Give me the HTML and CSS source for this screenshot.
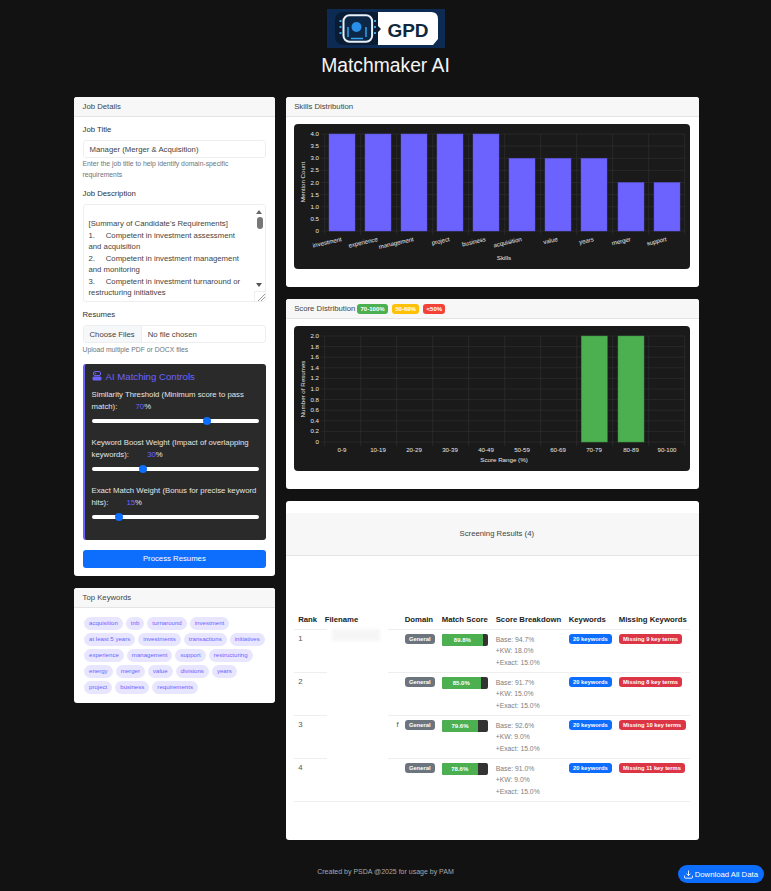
FILE: index.html
```html
<!DOCTYPE html>
<html lang="en">
<head>
    <meta charset="UTF-8">
    <meta name="viewport" content="width=device-width, initial-scale=1.0">
    <title>Matchmaker AI</title>
    <link rel="stylesheet" href="styles.css">
</head>
<body>

    <header class="page-head">
        <svg class="logo" viewBox="0 0 118 39" width="118" height="39">
            <rect width="118" height="39" fill="#0d2b52"/>
            <rect x="8" y="3" width="46" height="33" rx="8" fill="#0a1c33"/>
            <path d="M51 3h53q7 0 7 7v20l-5 6H51V23l3-3-3-3z" fill="#fff"/>
            <rect x="16.500" y="6.300" width="28.600" height="26.400" rx="6" fill="#0d2747" stroke="#e8f2fa" stroke-width="2"/>
            <circle cx="29.500" cy="18" r="5" fill="#2a8fe8"/>
            <path d="M21 28v-10M39 28v-10M24 29.500h12" stroke="#35a4e8" stroke-width="1.500" fill="none"/>
            <path d="M12.500 12h2M12.500 18h2M12.500 24h2M47 12h2M47 18h2M47 24h2" stroke="#35a4e8" stroke-width="2"/>
            <text class="logo-text" x="81" y="27.500" text-anchor="middle">GPD</text>
        </svg>
        <h1>Matchmaker AI</h1>
    </header>

    <main class="layout">
        <aside class="side">
            <section class="card">
                <div class="card-header">Job Details</div>
                <div class="card-body">
                    <label class="field-label">Job Title</label>
                    <div class="input">Manager (Merger &amp; Acquisition)</div>
                    <p class="hint hint-title">Enter the job title to help identify domain-specific requirements</p>

                    <label class="field-label">Job Description</label>
                    <div class="textarea">
                        <div class="textarea-text">[Summary of Candidate's Requirements]
1.     Competent in investment assessment and acquisition
2.     Competent in investment management and monitoring
3.     Competent in investment turnaround or restructuring initiatives
4.     Able to drive performance of portfolio</div>
                        <div class="scroll">
                            <span class="scroll-up"></span>
                            <span class="scroll-thumb"></span>
                            <span class="scroll-down"></span>
                            <span class="scroll-grip"></span>
                        </div>
                    </div>

                    <label class="field-label">Resumes</label>
                    <div class="file-input">
                        <span class="file-btn">Choose Files</span>
                        <span class="file-name">No file chosen</span>
                    </div>
                    <p class="hint">Upload multiple PDF or DOCX files</p>

                    <div class="ai-box">
                        <h3 class="ai-title">
                            <svg viewBox="0 0 10 10" width="10" height="10">
                                <rect x="1.500" y="0.500" width="7" height="4" rx="1.500" fill="none" stroke="#6c63ff" stroke-width="1"/>
                                <rect x="0.500" y="5.500" width="9" height="4" rx="1.500" fill="#6c63ff"/>
                                <circle cx="3.500" cy="2.500" r="0.800" fill="#6c63ff"/>
                            </svg>
                            AI Matching Controls
                        </h3>
                        <div class="ai-label">Similarity Threshold (Minimum score to pass<br>match): <span class="ai-val">70</span>%</div>
                        <input class="slider" type="range" min="0" max="100" value="70">
                        <div class="ai-label">Keyword Boost Weight (Impact of overlapping<br>keywords): <span class="ai-val">30</span>%</div>
                        <input class="slider" type="range" min="0" max="100" value="30">
                        <div class="ai-label">Exact Match Weight (Bonus for precise keyword<br>hits): <span class="ai-val">15</span>%</div>
                        <input class="slider" type="range" min="0" max="100" value="15">
                    </div>

                    <button class="btn-process">Process Resumes</button>
                </div>
            </section>

            <section class="card">
                <div class="card-header">Top Keywords</div>
                <div class="pills">
                    <span class="pill">acquisition</span>
                    <span class="pill">tnb</span>
                    <span class="pill">turnaround</span>
                    <span class="pill">investment</span>
                    <span class="pill">at least 5 years</span>
                    <span class="pill">investments</span>
                    <span class="pill">transactions</span>
                    <span class="pill">initiatives</span>
                    <span class="pill">experience</span>
                    <span class="pill">management</span>
                    <span class="pill">support</span>
                    <span class="pill">restructuring</span>
                    <span class="pill">energy</span>
                    <span class="pill">merger</span>
                    <span class="pill">value</span>
                    <span class="pill">divisions</span>
                    <span class="pill">years</span>
                    <span class="pill">project</span>
                    <span class="pill">business</span>
                    <span class="pill">requirements</span>
                </div>
            </section>
        </aside>

        <div class="content">
            <section class="card chart-card">
                <div class="card-header">Skills Distribution</div>
                <div class="chart-wrap">
                    <svg class="chart" viewBox="295 124 396 145" width="396" height="145">
                        <path class="grid" d="M322 134H686M322 146.100H686M322 158.300H686M322 170.400H686M322 182.500H686M322 194.600H686M322 206.800H686M322 218.900H686M322 231H686"/>
                        <path class="grid" d="M325.700 134V235M361.700 134V235M397.700 134V235M433.700 134V235M469.700 134V235M505.700 134V235M541.700 134V235M577.700 134V235M613.700 134V235M649.700 134V235M685.700 134V235"/>
                        <g class="bar-purple">
                            <rect x="330" y="134" width="26" height="97"/>
                            <rect x="366" y="134" width="26" height="97"/>
                            <rect x="402" y="134" width="26" height="97"/>
                            <rect x="438" y="134" width="26" height="97"/>
                            <rect x="474" y="134" width="26" height="97"/>
                            <rect x="510" y="158.300" width="26" height="72.700"/>
                            <rect x="546" y="158.300" width="26" height="72.700"/>
                            <rect x="582" y="158.300" width="26" height="72.700"/>
                            <rect x="619" y="182.500" width="26" height="48.500"/>
                            <rect x="655" y="182.500" width="26" height="48.500"/>
                        </g>
                        <g class="tick" text-anchor="end">
                            <text x="320" y="136">4.0</text>
                            <text x="320" y="148">3.5</text>
                            <text x="320" y="160">3.0</text>
                            <text x="320" y="172">2.5</text>
                            <text x="320" y="185">2.0</text>
                            <text x="320" y="197">1.5</text>
                            <text x="320" y="209">1.0</text>
                            <text x="320" y="221">0.5</text>
                            <text x="320" y="233">0</text>
                        </g>
                        <g class="tick" text-anchor="end">
                            <text transform="translate(343 241) rotate(-13)">investment</text>
                            <text transform="translate(379 241) rotate(-13)">experience</text>
                            <text transform="translate(415 241) rotate(-13)">management</text>
                            <text transform="translate(451 241) rotate(-13)">project</text>
                            <text transform="translate(487 241) rotate(-13)">business</text>
                            <text transform="translate(523 241) rotate(-13)">acquisition</text>
                            <text transform="translate(559 241) rotate(-13)">value</text>
                            <text transform="translate(595 241) rotate(-13)">years</text>
                            <text transform="translate(632 241) rotate(-13)">merger</text>
                            <text transform="translate(668 241) rotate(-13)">support</text>
                        </g>
                        <text class="axis" x="505" y="260" text-anchor="middle">Skills</text>
                        <text class="axis" transform="translate(306 182) rotate(-90)" text-anchor="middle">Mention Count</text>
                    </svg>
                </div>
            </section>

            <section class="card chart-card">
                <div class="card-header score-head">
                    Score Distribution
                    <span class="legend legend-green">70-100%</span>
                    <span class="legend legend-amber">50-69%</span>
                    <span class="legend legend-red">&lt;50%</span>
                </div>
                <div class="chart-wrap">
                    <svg class="chart" viewBox="295 326 396 145" width="396" height="145">
                        <path class="grid" d="M322 336H686M322 346.600H686M322 357.200H686M322 367.800H686M322 378.400H686M322 389H686M322 399.600H686M322 410.200H686M322 420.800H686M322 431.400H686M322 442H686"/>
                        <path class="grid" d="M325.700 336V446M361.700 336V446M397.700 336V446M433.700 336V446M469.700 336V446M505.700 336V446M541.700 336V446M577.700 336V446M613.700 336V446M649.700 336V446M685.700 336V446"/>
                        <g class="bar-green">
                            <rect x="582.300" y="336" width="26" height="106"/>
                            <rect x="619" y="336" width="26" height="106"/>
                        </g>
                        <g class="tick" text-anchor="end">
                            <text x="320" y="338">2.0</text>
                            <text x="320" y="348.600">1.8</text>
                            <text x="320" y="359.200">1.6</text>
                            <text x="320" y="369.800">1.4</text>
                            <text x="320" y="380.400">1.2</text>
                            <text x="320" y="391">1.0</text>
                            <text x="320" y="401.600">0.8</text>
                            <text x="320" y="412.200">0.6</text>
                            <text x="320" y="422.800">0.4</text>
                            <text x="320" y="433.400">0.2</text>
                            <text x="320" y="444">0</text>
                        </g>
                        <g class="tick" text-anchor="middle">
                            <text x="343" y="452">0-9</text>
                            <text x="379" y="452">10-19</text>
                            <text x="415" y="452">20-29</text>
                            <text x="451" y="452">30-39</text>
                            <text x="487" y="452">40-49</text>
                            <text x="523" y="452">50-59</text>
                            <text x="559" y="452">60-69</text>
                            <text x="595" y="452">70-79</text>
                            <text x="632" y="452">80-89</text>
                            <text x="668" y="452">90-100</text>
                        </g>
                        <text class="axis" x="505" y="462" text-anchor="middle">Score Range (%)</text>
                        <text class="axis" transform="translate(306 389) rotate(-90)" text-anchor="middle">Number of Resumes</text>
                    </svg>
                </div>
            </section>

            <section class="card results-card">
                <div class="results-head">Screening Results (4)</div>
                <table class="results">
                    <thead>
                        <tr>
                            <th class="c-rank">Rank</th>
                            <th class="c-file file">Filename<span class="patch"></span></th>
                            <th class="c-domain">Domain</th>
                            <th class="c-score">Match Score</th>
                            <th class="c-break">Score Breakdown</th>
                            <th class="c-kw">Keywords</th>
                            <th class="c-miss">Missing Keywords</th>
                        </tr>
                    </thead>
                    <tbody>
                        <tr>
                            <td>1</td>
                            <td class="file"><span class="smudge"></span><span class="patch"></span></td>
                            <td><span class="badge badge-grey">General</span></td>
                            <td><div class="score"><div class="score-fill" style="width: 89.8%">89.8%</div></div></td>
                            <td class="breakdown">Base: 94.7%<br>+KW: 18.0%<br>+Exact: 15.0%</td>
                            <td><span class="badge badge-blue">20 keywords</span></td>
                            <td><span class="badge badge-red">Missing 9 key terms</span></td>
                        </tr>
                        <tr>
                            <td>2</td>
                            <td class="file"><span class="patch"></span></td>
                            <td><span class="badge badge-grey">General</span></td>
                            <td><div class="score"><div class="score-fill" style="width: 85%">85.0%</div></div></td>
                            <td class="breakdown">Base: 91.7%<br>+KW: 15.0%<br>+Exact: 15.0%</td>
                            <td><span class="badge badge-blue">20 keywords</span></td>
                            <td><span class="badge badge-red">Missing 8 key terms</span></td>
                        </tr>
                        <tr>
                            <td>3</td>
                            <td class="file file-tail">f<span class="patch"></span></td>
                            <td><span class="badge badge-grey">General</span></td>
                            <td><div class="score"><div class="score-fill" style="width: 79.6%">79.6%</div></div></td>
                            <td class="breakdown">Base: 92.6%<br>+KW: 9.0%<br>+Exact: 15.0%</td>
                            <td><span class="badge badge-blue">20 keywords</span></td>
                            <td><span class="badge badge-red">Missing 10 key terms</span></td>
                        </tr>
                        <tr>
                            <td>4</td>
                            <td class="file"></td>
                            <td><span class="badge badge-grey">General</span></td>
                            <td><div class="score"><div class="score-fill" style="width: 78.6%">78.6%</div></div></td>
                            <td class="breakdown">Base: 91.0%<br>+KW: 9.0%<br>+Exact: 15.0%</td>
                            <td><span class="badge badge-blue">20 keywords</span></td>
                            <td><span class="badge badge-red">Missing 11 key terms</span></td>
                        </tr>
                    </tbody>
                </table>
            </section>
        </div>
    </main>

    <footer class="page-foot">Created by PSDA @2025 for usage by PAM</footer>

    <button class="btn-download">
        <svg viewBox="0 0 16 16" width="9" height="9">
            <path d="M8 1v9M4.500 6.500 8 10l3.500-3.500M1 10v3.500q0 1 1 1h12q1 0 1-1V10" fill="none" stroke="#fff" stroke-width="1.600"/>
        </svg>
        Download All Data
    </button>

</body>
</html>
```

FILE: styles.css
```css
* {
    margin: 0;
    padding: 0;
    box-sizing: border-box;
}

body {
    font-family: "Liberation Sans", Arial, sans-serif;
    background-color: #121212;
    color: #212529;
    font-size: 7.75px;
    height: 891px;
    overflow: hidden;
}

/* page head */
.page-head {
    display: flex;
    flex-direction: column;
    align-items: center;
    padding-top: 9px;
}

.logo {
    display: block;
}

.logo-text {
    font-weight: 700;
    font-size: 19px;
    fill: #10283c;
}

h1 {
    color: #f5f5f5;
    font-size: 19.300px;
    font-weight: 400;
    line-height: 24px;
    margin-top: 6px;
}

/* columns */
.layout {
    display: flex;
    gap: 11px;
    width: 625px;
    margin: 19px 0 0 74px;
}

.side {
    width: 201px;
    display: flex;
    flex-direction: column;
    gap: 12px;
}

.content {
    width: 414px;
    display: flex;
    flex-direction: column;
    gap: 12px;
}

.card {
    background: #fff;
    border-radius: 3px;
    overflow: hidden;
}

.card-header {
    height: 20px;
    line-height: 19px;
    padding: 0 8.500px;
    background: #f7f7f7;
    border-bottom: 1px solid #e4e4e4;
    color: #444;
}

.card-body {
    padding: 8px 8.500px;
}

/* form */
.field-label {
    display: block;
    line-height: 10px;
    color: #333;
}

.input {
    height: 18px;
    line-height: 17px;
    margin-top: 5px;
    padding: 0 6px;
    border: 1px solid #eceef0;
    border-radius: 3px;
    color: #444;
}

.hint {
    font-size: 6.800px;
    line-height: 10.500px;
    color: #6c757d;
    margin-top: 2px;
    margin-bottom: 8px;
}

.hint-title {
    margin-top: 1px;
    margin-bottom: 9px;
}

.textarea {
    position: relative;
    height: 98px;
    margin-top: 5px;
    margin-bottom: 8px;
    border: 1px solid #eceef0;
    border-radius: 3px;
    overflow: hidden;
}

.textarea-text {
    padding: 13px 16px 0 5px;
    line-height: 11.500px;
    color: #444;
    white-space: pre-wrap;
}

.scroll {
    position: absolute;
    top: 0;
    right: 0;
    bottom: 0;
    width: 11px;
    background: #fff;
}

.scroll-up {
    position: absolute;
    top: 5px;
    left: 2px;
    border: 3.500px solid transparent;
    border-top: 0;
    border-bottom: 4px solid #666;
}

.scroll-thumb {
    position: absolute;
    top: 12px;
    left: 2.500px;
    width: 6px;
    height: 12px;
    border-radius: 3px;
    background: #777;
}

.scroll-down {
    position: absolute;
    bottom: 14px;
    left: 2px;
    border: 3.500px solid transparent;
    border-bottom: 0;
    border-top: 4px solid #555;
}

.scroll-grip {
    position: absolute;
    right: 0;
    bottom: 0;
    width: 11px;
    height: 10px;
    border-top: 1px solid #eee;
    border-left: 1px solid #eee;
    background: linear-gradient(135deg, #fff 62%, #999 62%, #999 68%, #fff 68%, #fff 78%, #999 78%, #999 84%, #fff 84%);
}

.file-input {
    display: flex;
    height: 18px;
    line-height: 17px;
    margin-top: 5px;
    border: 1px solid #eceef0;
    border-radius: 3px;
    overflow: hidden;
    color: #444;
}

.file-btn {
    padding: 0 6px;
    background: #f6f7f8;
    border-right: 1px solid #eceef0;
}

.file-name {
    padding: 0 6px;
}

/* AI box */
.ai-box {
    background: #2a2a2a;
    border-left: 2px solid #6c63ff;
    border-radius: 3px;
    height: 176px;
    padding: 6px 7px 0 7px;
    color: #e4e4e4;
}

.ai-title {
    display: flex;
    align-items: center;
    gap: 4px;
    font-size: 9.650px;
    font-weight: 400;
    line-height: 13px;
    color: #6c63ff;
    margin-bottom: 6px;
}

.ai-label {
    line-height: 12px;
}

.ai-val {
    color: #6c63ff;
    margin-left: 16px;
}

.slider {
    -webkit-appearance: none;
    appearance: none;
    display: block;
    width: 100%;
    height: 8px;
    margin: 4px 0 12px;
    background: transparent;
}

.slider::-webkit-slider-runnable-track {
    height: 4px;
    background: #fff;
    border-radius: 2px;
}

.slider::-webkit-slider-thumb {
    -webkit-appearance: none;
    width: 8px;
    height: 8px;
    margin-top: -2px;
    border-radius: 50%;
    background: #0d6efd;
}

.btn-process {
    display: block;
    width: 100%;
    height: 18px;
    margin-top: 10px;
    background: #0d6efd;
    color: #fff;
    border: none;
    border-radius: 3px;
    font-family: inherit;
    font-size: 7.75px;
}

/* keywords */
.pills {
    display: flex;
    flex-wrap: wrap;
    gap: 3.600px 3px;
    padding: 9.500px 9px 9.500px 10px;
}

.pill {
    height: 12.500px;
    line-height: 12.500px;
    padding: 0 5px;
    border-radius: 7px;
    background: #e8e6ff;
    color: #6c63ff;
    font-size: 6.100px;
}

/* charts */
.chart-card {
    height: 190px;
}

.chart-wrap {
    padding: 7px 8.500px 0;
}

.chart {
    display: block;
    background: #1a1a1a;
    border-radius: 4px;
}

.grid {
    stroke: #2e2e2e;
    stroke-width: 0.700;
    fill: none;
}

.bar-purple rect {
    fill: #6c63ff;
    stroke: #5a52d5;
    stroke-width: 0.500;
}

.bar-green rect {
    fill: #4caf50;
    stroke: #3c8f40;
    stroke-width: 0.500;
}

.tick {
    fill: #e8e8e8;
    font-size: 6.100px;
}

.axis {
    fill: #e8e8e8;
    font-size: 6.200px;
}

.score-head {
    display: flex;
    align-items: center;
}

.legend {
    height: 10px;
    line-height: 10px;
    padding: 0 3.200px;
    margin-left: 4.300px;
    border-radius: 3px;
    color: #fff;
    font-size: 6px;
    font-weight: 700;
}

.legend-green {
    background: #4caf50;
    margin-left: 2px;
}

.legend-amber {
    background: #ffc107;
}

.legend-red {
    background: #f44336;
}

/* results table */
.results-card {
    height: 339px;
    padding-top: 12px;
}

.results-head {
    height: 43px;
    line-height: 42px;
    padding-left: 9px;
    text-align: center;
    background: #f7f7f7;
    border-bottom: 1px solid #e4e4e4;
    color: #444;
}

.results {
    width: 396px;
    margin: 54px 0 0 8.500px;
    border-collapse: collapse;
    table-layout: fixed;
}

.results th {
    height: 19px;
    padding: 0 4px;
    text-align: left;
    font-size: 7.750px;
    font-weight: 700;
    color: #222;
    white-space: nowrap;
    border-bottom: 1px solid #eee;
}

.results td {
    height: 43px;
    padding: 4px 4px 3px;
    vertical-align: top;
    color: #555;
    border-bottom: 1px solid #eee;
}

.c-rank {
    width: 26.500px;
}

.c-file {
    width: 80px;
}

.c-domain {
    width: 37px;
}

.c-score {
    width: 54px;
}

.c-break {
    width: 73px;
}

.c-kw {
    width: 50px;
}

.c-miss {
    width: 75.500px;
}

.file {
    position: relative;
}

.results td.file-tail {
    text-align: right;
    padding-right: 2px;
}

/* blanked-out filenames */
.patch {
    position: absolute;
    left: 6px;
    right: 13px;
    bottom: -2px;
    height: 3px;
    background: #fff;
}

.smudge {
    position: absolute;
    left: 11px;
    top: -1px;
    width: 48px;
    height: 12px;
    background: #f6f6f6;
    filter: blur(1.500px);
    z-index: 1;
}

.results td.breakdown {
    font-size: 6.800px;
    line-height: 11.500px;
    color: #808080;
}

.badge {
    display: inline-block;
    height: 10px;
    line-height: 10px;
    padding: 0 4.300px;
    border-radius: 3px;
    color: #fff;
    font-size: 5.800px;
    font-weight: 700;
    white-space: nowrap;
    vertical-align: top;
}

.badge-grey {
    background: #6c757d;
}

.badge-blue {
    background: #0d6efd;
}

.badge-red {
    background: #dc3545;
}

.score {
    height: 12px;
    width: 46px;
    background: #333;
    border-radius: 2px;
    overflow: hidden;
}

.score-fill {
    height: 12px;
    line-height: 12px;
    text-align: center;
    background: #4caf50;
    color: #fff;
    font-size: 6px;
    font-weight: 700;
}

/* footer */
.page-foot {
    margin-top: 27px;
    text-align: center;
    color: #a8a8a8;
    font-size: 7px;
    line-height: 10px;
}

.btn-download {
    position: fixed;
    right: 7px;
    bottom: 8px;
    display: flex;
    align-items: center;
    gap: 2px;
    height: 18px;
    padding: 0 6px;
    border: none;
    border-radius: 9px;
    background: #0d6efd;
    color: #fff;
    font-family: inherit;
    font-size: 7.75px;
}
```
